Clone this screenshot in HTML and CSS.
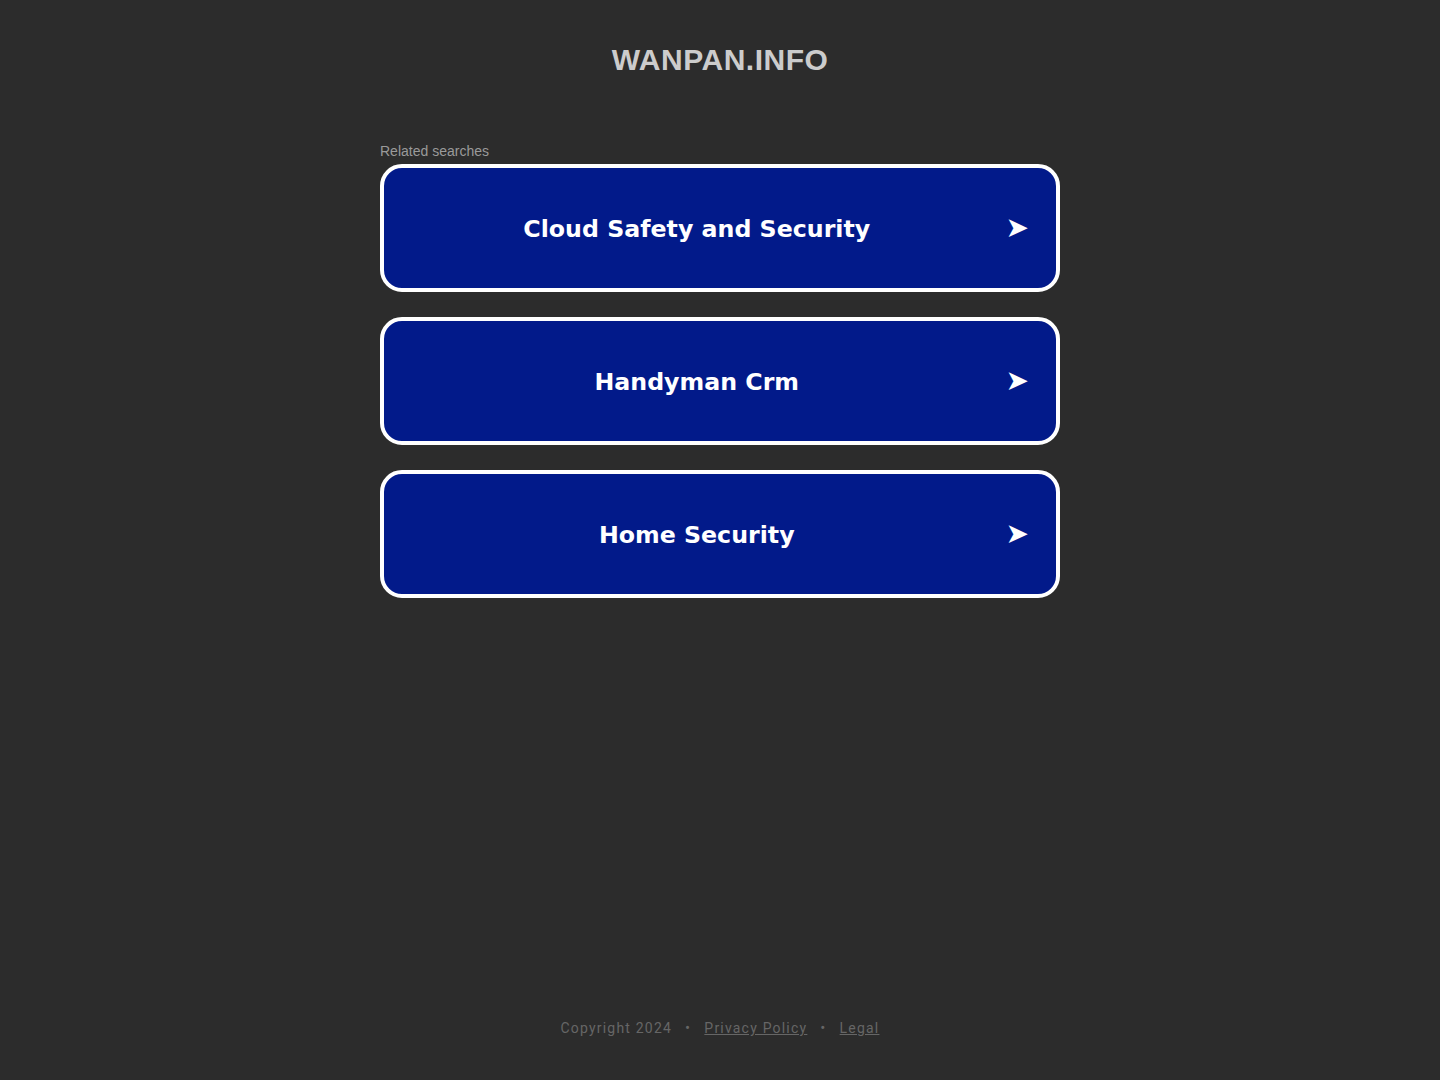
FILE: index.html
```html
<!DOCTYPE html>
<html>
<head>
<meta charset="utf-8">
<title>wanpan.info</title>
<link rel="stylesheet" href="styles.css">
</head>
<body>
<div class="page">
  <header class="header">
    <h1 class="domain">WANPAN.INFO</h1>
  </header>

  <main class="related">
    <p class="related-title">Related searches</p>
    <div class="links">
      <a class="link" href="#">
        <span class="link-text">Cloud Safety and Security</span>
        <span class="link-arrow">&#10148;</span>
      </a>
      <a class="link" href="#">
        <span class="link-text">Handyman Crm</span>
        <span class="link-arrow">&#10148;</span>
      </a>
      <a class="link" href="#">
        <span class="link-text">Home Security</span>
        <span class="link-arrow">&#10148;</span>
      </a>
    </div>
  </main>

  <footer class="footer">
    <span>Copyright 2024</span>
    <span class="dot">&bull;</span>
    <a href="#">Privacy Policy</a>
    <span class="dot">&bull;</span>
    <a href="#">Legal</a>
  </footer>
</div>
</body>
</html>
```

FILE: styles.css
```css
html, body {
  margin: 0;
  padding: 0;
  background-color: #2c2c2c;
}
.page {
  min-height: 1080px;
  display: flex;
  flex-direction: column;
  align-items: center;
}
.header {
  padding-top: 42px;
}
.domain {
  margin: 0;
  font-family: "Liberation Sans", Arial, sans-serif;
  font-size: 30px;
  font-weight: bold;
  line-height: 36px;
  color: #cccccc;
  letter-spacing: 0.5px;
}
.related {
  width: 680px;
  margin-top: 65px;
}
.related-title {
  margin: 0 0 5px 0;
  font-family: "Liberation Sans", Arial, sans-serif;
  font-size: 14px;
  line-height: 16px;
  color: #9a9a9a;
}
.links {
  display: flex;
  flex-direction: column;
  gap: 25px;
}
.link {
  display: flex;
  align-items: center;
  height: 128px;
  box-sizing: border-box;
  border: 4px solid #ffffff;
  border-radius: 22px;
  background-color: #021a8a;
  color: #ffffff;
  text-decoration: none;
  font-family: "DejaVu Sans", Verdana, sans-serif;
  font-weight: bold;
  font-size: 23.7px;
  padding: 1px 27px 0 4px;
}
.link-text {
  flex: 1;
  text-align: center;
}
.link-arrow {
  font-size: 28px;
  line-height: 28px;
  margin-top: -1px;
}
.footer {
  margin-top: auto;
  padding-bottom: 42px;
  font-family: Roboto, sans-serif;
  font-size: 14px;
  letter-spacing: 1.2px;
  color: #666666;
  display: flex;
  align-items: center;
  gap: 13px;
}
.footer a {
  color: #666666;
}
.dot {
  font-size: 15px;
  line-height: 20px;
}
```
